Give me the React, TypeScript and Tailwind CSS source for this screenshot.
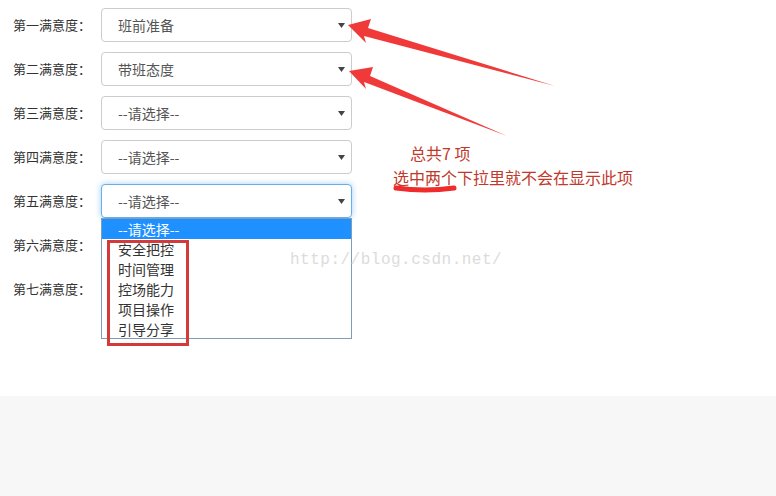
import React from "react";

const rows = [
  { label: "第一满意度：", value: "班前准备" },
  { label: "第二满意度：", value: "带班态度" },
  { label: "第三满意度：", value: "--请选择--" },
  { label: "第四满意度：", value: "--请选择--" },
  { label: "第五满意度：", value: "--请选择--", focus: true },
  { label: "第六满意度：", value: null },
  { label: "第七满意度：", value: null },
];

const options = ["安全把控", "时间管理", "控场能力", "项目操作", "引导分享"];

function Caret() {
  return (
    <svg width="7" height="5" viewBox="0 0 7 5" className="absolute right-[6px] top-[14px]">
      <path d="M0 0 L7 0 L3.5 5 Z" fill="#444" />
    </svg>
  );
}

function SelectBox({ value, focus }: { value: string; focus?: boolean }) {
  return (
    <div
      className={`relative w-[251px] h-[34px] rounded-[4px] bg-white border flex items-center pl-[16px] text-[14px] text-[#555] ${
        focus ? "border-[#66afe9] shadow-[0_0_6px_rgba(102,175,233,0.6)]" : "border-[#ccc]"
      }`}
    >
      {value}
      <Caret />
    </div>
  );
}

export default function App() {
  return (
    <div
      className="w-[776px] h-[496px] bg-[#f7f7f7] overflow-hidden"
      style={{ fontFamily: '"Noto Sans CJK SC", "Noto Sans", sans-serif' }}
    >
      <div className="relative h-[396px] bg-white pt-[8px] pl-[13px] flex">
        <div className="flex flex-col gap-[10px]">
          {rows.map((r, i) => (
            <div key={i} className="relative flex items-center h-[34px]">
              <span className="w-[88px] text-[13px] text-[#333]">{r.label}</span>
              {r.value && <SelectBox value={r.value} focus={r.focus} />}
              {r.focus && (
                <div className="absolute left-[88px] top-[34px] w-[251px] h-[121px] bg-white border border-[#7f9db9] z-10 text-[14px] text-[#333] leading-[20px]">
                  <div className="bg-[#1e90ff] text-white pl-[16px] h-[20px]">--请选择--</div>
                  <div className="relative">
                    {options.map((o) => (
                      <div key={o} className="pl-[16px] h-[20px]">{o}</div>
                    ))}
                    {/* red annotation box */}
                    <div className="absolute left-[5px] top-[1px] w-[82px] h-[106px] border-[3px] border-[#d43a3a]" />
                  </div>
                </div>
              )}
            </div>
          ))}
        </div>

        {/* note */}
        <div className="ml-[41px] mt-[133px] text-[16px] text-[#c0392b] leading-[24px]">
          <div className="pl-[17px]">总共7 项</div>
          <div>选中两个下拉里就不会在显示此项</div>
        </div>

        {/* watermark */}
        <div
          className="absolute left-[290px] top-[248px] text-[16px] text-[#dcdcdc] z-30 tracking-[0.5px]"
          style={{ fontFamily: '"Liberation Mono", monospace' }}
        >
          http://blog.csdn.net/
        </div>

        {/* arrows */}
        <svg className="absolute left-0 top-0 z-30 pointer-events-none" width="776" height="396">
          <path d="M348 25 L371 19 L368 28 L555 86 L364 36 L366 43 Z" fill="#f03a3a" />
          <path d="M349 71 L373 67 L370 76 L507 136 L364 82 L366 89 Z" fill="#f03a3a" />
          <path d="M396 188 Q425 192 454 188" stroke="#f02b2b" strokeWidth="5" strokeLinecap="round" fill="none" />
        </svg>
      </div>
    </div>
  );
}
